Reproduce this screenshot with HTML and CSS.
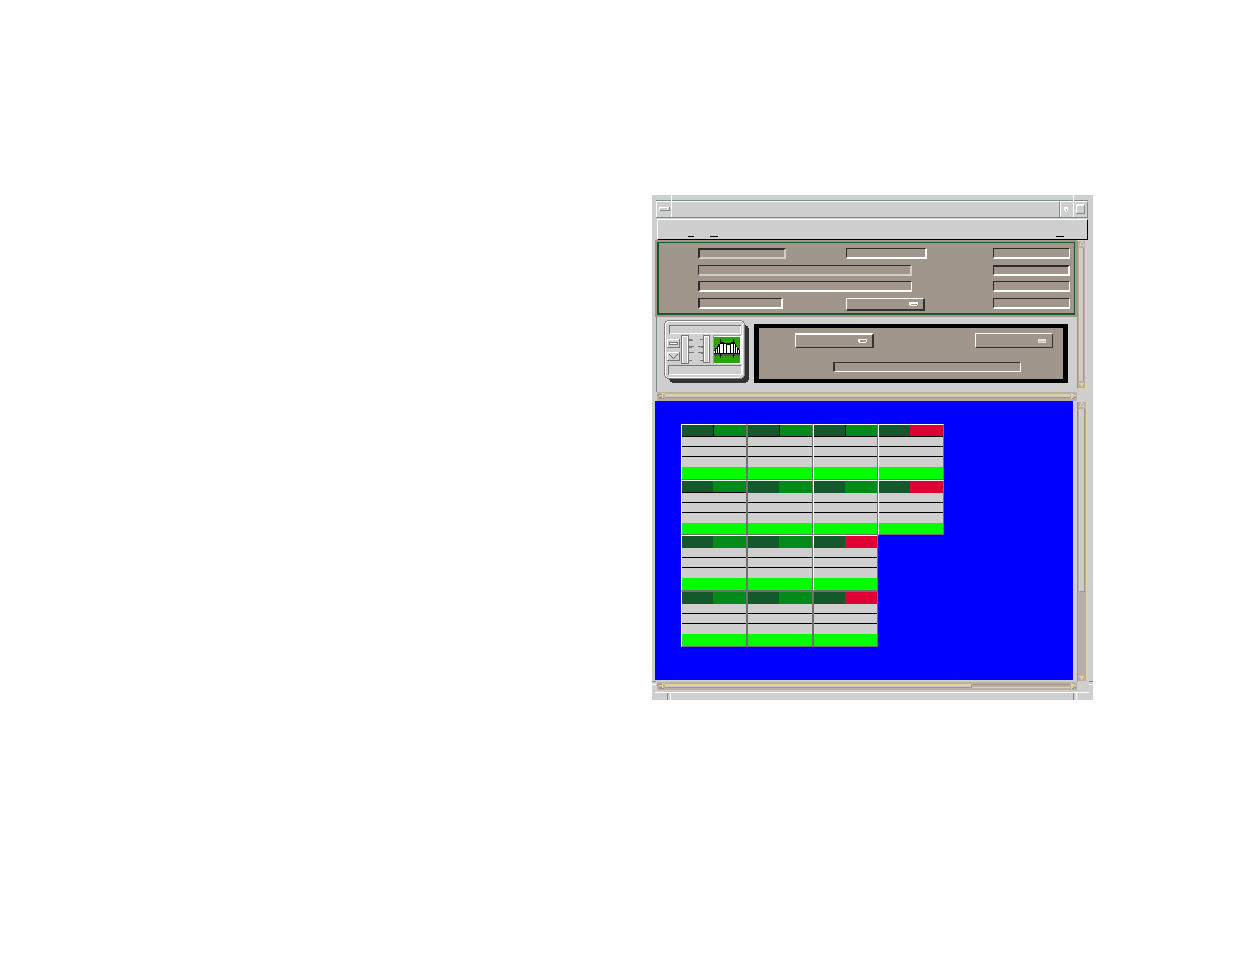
FILE: index.html
```html
<!DOCTYPE html>
<html lang="en">
<head>
  <meta charset="UTF-8" />
  <title>Monitor</title>
  <link rel="stylesheet" href="styles.css">
</head>
<body>

  <div class="window">

    <!-- Title bar -->
    <div class="titlebar">
      <button class="win-menu" aria-label="Window menu">
        <svg width="11" height="4" shape-rendering="crispEdges"><path d="M0 3V0h10v1H1v2z" fill="#fff"/><path d="M1 3h9V0h1v4H1z" fill="#7b8c8c"/><path d="M8 1h1v2H8z" fill="#fff"/></svg>
      </button>
      <div class="title"></div>
      <button class="win-min" aria-label="Minimize">
        <svg width="4" height="5" shape-rendering="crispEdges"><path d="M0 0h4v4H3v1H1V4H0z" fill="#fff"/><path d="M2 2h1v2H2z" fill="#bcbcbc"/></svg>
      </button>
      <button class="win-max" aria-label="Maximize">
        <svg width="9" height="10" shape-rendering="crispEdges"><path d="M0 0h8v2H1v8H0z" fill="#fff"/><path d="M8 1h1v9H0V9h8z" fill="#7b8c8c"/></svg>
      </button>
    </div>

    <!-- Menu bar, only the mnemonic marks show -->
    <div class="menubar">
      <button class="menu" aria-label="File"></button>
      <button class="menu wide" aria-label="Mode"></button>
      <button class="menu wide last" aria-label="Help"></button>
    </div>

    <!-- Upper pane: details and controls -->
    <div class="pane">
      <div class="main">
        <div class="info">
          <form class="fields">
            <input class="field w-small dim thick-top thick-left thick-right" aria-label="Name">
            <input class="field w-mid thick-right" aria-label="Type">
            <input class="field" aria-label="Status">

            <input class="field w-long dim thick-right" aria-label="Description">
            <input class="field thick-top thick-right" aria-label="Count">

            <input class="field w-long thick-left" aria-label="Location">
            <input class="field" aria-label="Limit">

            <input class="field w-code thick-left thick-right" aria-label="Code">
            <span class="option heavy">
              <select aria-label="State"><option></option></select>
              <svg width="9" height="4" shape-rendering="crispEdges"><path d="M0 0h9v3H8v1H1V3H0z" fill="#fff"/><path d="M2 2h6v1H2z" fill="#a1968b"/></svg>
            </span>
            <input class="field" aria-label="Total">
          </form>
        </div>

        <div class="controls">
          <svg class="device" width="86" height="63" shape-rendering="crispEdges">
            <rect x="5" y="5" width="80" height="58" rx="5" fill="#333"/>
            <rect x="0" y="0" width="81" height="59" rx="5" fill="#848484"/>
            <rect x="1" y="1" width="79" height="57" rx="4" fill="#fff"/>
            <rect x="2" y="2" width="78" height="56" rx="4" fill="#cfcfcf"/>
            <path d="M78 4v50l-3 3H5" fill="none" stroke="#fff"/>
            <!-- name plates -->
            <path d="M5 14V5h72v1H6v8z" fill="#777"/>
            <path d="M6 13h70V6h1v8H6z" fill="#fff"/>
            <path d="M4 55V45h73v1H5v9z" fill="#777"/>
            <path d="M5 54h72v-8h1v9H5z" fill="#fff"/>
            <!-- buttons -->
            <path d="M3 19h13v9H3z" fill="#777"/>
            <path d="M3 19h12v8H3z" fill="#fff"/>
            <path d="M4 20h11v7H4z" fill="#cfcfcf"/>
            <path d="M5 22h9v1H6v2H5z" fill="#777"/>
            <path d="M6 23h7v1H6z" fill="#fff"/>
            <path d="M5 24h8v-2h1v3H5z" fill="#777"/>
            <path d="M3 32h13v9H3z" fill="#777"/>
            <path d="M3 32h12v8H3z" fill="#fff"/>
            <path d="M4 33h11v7H4z" fill="#cfcfcf"/>
            <path d="M5 34l4 4h1l4-4" fill="none" stroke="#666"/>
            <!-- sliders -->
            <path d="M17 15h8v29h-8z" fill="#777"/>
            <path d="M18 16h6v27h-6z" fill="#fff"/>
            <path d="M19 17h4v26h-4z" fill="#cfcfcf"/>
            <path d="M39 15h7v28h-7z" fill="#777"/>
            <path d="M40 16h5v26h-5z" fill="#fff"/>
            <path d="M41 17h3v25h-3z" fill="#cfcfcf"/>
            <path d="M25 19h3v1h-3zM25 26h5v1h-5zM25 32h5v1h-5zM25 40h3v1h-3zM36 19h3v1h-3zM34 26h5v1h-5zM34 32h5v1h-5zM36 40h3v1h-3zM25 20h4v1h-4zM25 27h3v1h-3zM37 27h2v1h-2zM37 33h2v1h-2z" fill="#777"/>
            <!-- bridge -->
            <path d="M49 15h29v29H49z" fill="#fff"/>
            <path d="M49 15h28v1H50v28h-1z" fill="#9a9a9a"/>
            <path d="M50 17h26v26H50z" fill="#2ca209"/>
            <path d="M50 34h26v2H50z" fill="#555"/>
            <path d="M50 34v-4h1v-2h2v-2h1v-2h2v-5h1v3h3v1h7v-1h2v-3h1v3h1v2h1v2h1v2h2v2h1v4z" fill="#000"/>
            <path d="M50 31h1v2h-1zM52 29h1v4h-1zM54 27h1v6h-1zM56 24h3v9h-3zM60 24h2v9h-2zM63 25h3v8h-3zM67 24h2v9h-2zM70 24h1v9h-1zM72 27h1v6h-1zM74 30h1v3h-1z" fill="#fff"/>
            <path d="M56 33h1v5h-1zM69 33h1v5h-1z" fill="#000"/>
          </svg>

          <form class="command">
            <div class="options">
              <span class="option top">
                <select aria-label="Action"><option></option></select>
                <svg width="9" height="4" shape-rendering="crispEdges"><path d="M0 0h9v3H8v1H1V3H0z" fill="#fff"/><path d="M2 1h6v2H2z" fill="#a1968b"/></svg>
              </span>
              <span class="option narrow">
                <select aria-label="Filter"><option></option></select>
                <svg width="8" height="4" shape-rendering="crispEdges"><path d="M0 0h8v4H0z" fill="#e4e4e4"/><path d="M1 2h6v1H1z" fill="#bbb"/></svg>
              </span>
            </div>
            <input class="entry" aria-label="Command">
          </form>
        </div>

        <div class="hscroll">
          <svg width="8" height="6" shape-rendering="crispEdges"><path d="M0 3h2V2h3V0h3v1H6v4H5V3z" fill="#e8cf9f"/><path d="M0 2h1V1h4v1H2v1H0zM2 4h3v1h2v1H2z" fill="#a09488"/></svg>
          <div class="thumb"></div>
          <svg width="7" height="6" shape-rendering="crispEdges"><path d="M1 0h1v1h2v1h2v1H3v2H2v1H1z" fill="#e8cf9f"/><path d="M6 3v1H4v1H2v1h2V5h2z" fill="#a09488"/></svg>
        </div>
      </div>

      <div class="vscroll upper">
        <svg width="6" height="6" shape-rendering="crispEdges"><path d="M2 0h1v2H2v2H1v1H0V4h1V2h1z" fill="#e8cf9f"/><path d="M3 0h1v2h1v2h1v1H1V4h3V2H3z" fill="#cdcdc5"/></svg>
        <div class="thumb"></div>
        <svg width="6" height="6" shape-rendering="crispEdges"><path d="M0 1h5v1H4v2H3v1H2V3H1V2H0z" fill="#e8cf9f"/></svg>
      </div>
    </div>

    <!-- Lower pane: board of cards -->
    <div class="pane">
      <div class="main">
        <div class="board">
          <div class="cards">
            <div class="card split"><div class="head"><i></i><i></i></div><p></p><p></p><p></p><div class="ok"></div></div>
            <div class="card split shade-left"><div class="head"><i></i><i></i></div><p></p><p></p><p></p><div class="ok"></div></div>
            <div class="card split"><div class="head"><i></i><i></i></div><p></p><p></p><p></p><div class="ok"></div></div>
            <div class="card alarm ruled"><div class="head"><i></i><i></i></div><p></p><p></p><p></p><div class="ok"></div></div>

            <div class="card ruled"><div class="head"><i></i><i></i></div><p></p><p></p><p></p><div class="ok"></div></div>
            <div class="card shade-left"><div class="head"><i></i><i></i></div><p></p><p></p><p></p><div class="ok"></div></div>
            <div class="card"><div class="head"><i></i><i></i></div><p></p><p></p><p></p><div class="ok"></div></div>
            <div class="card alarm"><div class="head"><i></i><i></i></div><p></p><p></p><p></p><div class="ok"></div></div>

            <div class="card first"><div class="head"><i></i><i></i></div><p></p><p></p><p></p><div class="ok"></div></div>
            <div class="card shade-left"><div class="head"><i></i><i></i></div><p></p><p></p><p></p><div class="ok"></div></div>
            <div class="card alarm"><div class="head"><i></i><i></i></div><p></p><p></p><p></p><div class="ok"></div></div>

            <div class="card first shade-top"><div class="head"><i></i><i></i></div><p></p><p></p><p></p><div class="ok"></div></div>
            <div class="card shade-left shade-top"><div class="head"><i></i><i></i></div><p></p><p></p><p></p><div class="ok"></div></div>
            <div class="card alarm shade-left shade-top"><div class="head"><i></i><i></i></div><p></p><p></p><p></p><div class="ok"></div></div>
          </div>
        </div>

        <div class="hscroll lower">
          <svg width="8" height="6" shape-rendering="crispEdges"><path d="M0 3h2V2h3V0h3v1H6v4H5V3z" fill="#e8cf9f"/><path d="M0 2h1V1h4v1H2v1H0zM2 4h3v1h2v1H2z" fill="#a09488"/></svg>
          <div class="thumb"></div>
          <div class="track"></div>
          <svg width="7" height="6" shape-rendering="crispEdges"><path d="M1 0h1v1h2v1h2v1H3v2H2v1H1z" fill="#e8cf9f"/><path d="M6 3v1H4v1H2v1h2V5h2z" fill="#a09488"/></svg>
        </div>
      </div>

      <div class="vscroll lower">
        <svg width="6" height="6" shape-rendering="crispEdges"><path d="M2 0h1v2H2v2H1v1H0V4h1V2h1z" fill="#e8cf9f"/><path d="M3 0h1v2h1v2h1v1H1V4h3V2H3z" fill="#cdcdc5"/></svg>
        <div class="thumb"></div>
        <div class="track"></div>
        <svg width="6" height="6" shape-rendering="crispEdges"><path d="M0 1h5v1H4v2H3v1H2V3H1V2H0z" fill="#e8cf9f"/></svg>
      </div>
    </div>

    <!-- Resize edge -->
    <div class="bottom"></div>
  </div>

</body>
</html>
```

FILE: styles.css
```css
* {
  box-sizing: border-box;
}
body {
  margin: 0;
  padding: 195px 142px 0 652px;
  background: #fff;
  font-family: "Liberation Sans", Arial, sans-serif;
  font-size: 8px;
}
button, input, select {
  appearance: none;
  margin: 0;
  padding: 0;
  border: 0;
  border-radius: 0;
  background: none;
  font: inherit;
  outline: none;
  min-width: 0;
}
svg {
  display: block;
  flex: none;
}
.window {
  position: relative;
  background: #cfcfcf;
  padding-top: 5px;
}
/* corner marks on the resize frame */
.window::before, .window::after {
  content: "";
  position: absolute;
  bottom: 15px;
  width: 4px;
  height: 2px;
  border-top: 1px solid #7b8c8c;
  border-bottom: 1px solid #fff;
}
.window::before {
  left: 0;
}
.window::after {
  right: 0;
}

/* title bar */
.titlebar {
  display: flex;
  height: 18px;
  margin: 0 5px 0 4px;
  border-top: 1px solid #7b8c8c;
  border-bottom: 1px solid #7b8c8c;
}
.titlebar button {
  display: flex;
  justify-content: center;
  align-items: center;
  border-top: 1px solid #fff;
}
.titlebar .win-menu {
  width: 16px;
  padding-bottom: 1px;
  border-left: 1px solid #fff;
  border-right: 1px solid #fff;
}
.title {
  flex: 1;
  border-top: 1px solid #fff;
  border-right: 1px solid #7b8c8c;
}
.titlebar .win-min {
  width: 14px;
  padding: 0 2px 1px 0;
  border-left: 1px solid #fff;
  border-right: 1px solid #fff;
}
.titlebar .win-max {
  width: 14px;
  padding: 0 1px 2px 0;
  border-right: 1px solid #7b8c8c;
}
.win-menu, .win-min {
  position: relative;
}
.win-menu::after, .win-min::after {
  content: "";
  position: absolute;
  top: -7px;
  right: -1px;
  width: 1px;
  height: 7px;
  background: #fff;
}

/* menu bar */
.menubar {
  display: flex;
  align-items: flex-end;
  gap: 16px;
  height: 21px;
  margin: 1px 5px 0 5px;
  padding: 0 23px 2px 30px;
  border-top: 1px solid #fff;
  border-left: 1px solid #fff;
  border-right: 1px solid #000;
  border-bottom: 1px solid #000;
}
.menu {
  width: 6px;
  height: 14px;
  border-bottom: 1px solid #000;
}
.menu.wide {
  width: 8px;
}
.menu.last {
  margin-left: auto;
}

/* panes */
.pane {
  display: grid;
  grid-template-columns: minmax(0, 1fr) 10px;
  margin: 0 6px 0 3px;
}
.info {
  padding: 2px;
  background: #a1968b;
}
.fields {
  display: grid;
  grid-template-columns: 148px 1fr 77px;
  grid-template-rows: 17px 16px 17px 13px;
  align-items: start;
  padding: 5px 4px 2px 39px;
  border: 2px solid #14592b;
  border-top-width: 1px;
  border-right-width: 1px;
}
.field {
  width: 77px;
  height: 11px;
  border: 1px solid #33292b;
  border-right-color: #fff;
  border-bottom: 2px solid #fff;
}
.field.dim {
  border-right-color: #cfcfcf;
  border-bottom-color: #cfcfcf;
}
.field.thick-top {
  border-top-width: 2px;
}
.field.thick-left {
  border-left-width: 2px;
}
.field.thick-right {
  border-right-width: 2px;
}
.w-small {
  width: 88px;
}
.w-mid {
  width: 81px;
}
.w-long {
  grid-column: span 2;
  width: 214px;
}
.w-code {
  width: 85px;
}
.option {
  display: flex;
  align-items: center;
  width: 79px;
  height: 15px;
  padding-right: 5px;
  border: 1px solid #fff;
  border-right-color: #333;
  border-bottom-color: #333;
}
.option select {
  flex: 1;
  height: 100%;
}
.option.heavy {
  height: 13px;
  border-right-width: 2px;
  border-bottom-width: 2px;
}
.option.top {
  border-top-width: 2px;
  border-right-width: 2px;
}
.option.narrow {
  width: 78px;
  padding-right: 6px;
}

.controls {
  display: flex;
  gap: 4px;
  margin-left: 1px;
  padding: 3px 9px 9px 7px;
  border-left: 1px solid #7b8c8c;
}
.command {
  flex: 1;
  margin-top: 4px;
  padding: 5px 10px 7px 36px;
  background: #a1968b;
  border: solid #000;
  border-width: 4px 5px;
}
.options {
  display: flex;
  justify-content: space-between;
}
.entry {
  display: block;
  width: 188px;
  height: 10px;
  margin: 14px 0 0 38px;
  border: 1px solid #fff;
  border-top-color: #333;
  border-left: 2px solid #333;
}

/* scroll bars */
.hscroll {
  display: flex;
  align-items: center;
  height: 9px;
  margin-left: 2px;
  background: #b9afa4;
  border-bottom: 1px solid #b9afa4;
}
.hscroll .thumb {
  flex: 1;
  height: 4px;
  background: #cdcdc5;
  border-top: 1px solid #e8cf9f;
  border-bottom: 1px solid #a09488;
}
.hscroll.lower {
  height: 12px;
  border-top: 2px solid #cdcdc5;
  border-bottom: 2px solid #cdcdc5;
}
.hscroll.lower .thumb {
  border-right: 1px solid #a09488;
}
.hscroll .track {
  width: 98px;
  height: 4px;
  border-top: 1px solid #a09488;
  border-bottom: 1px solid #e8cf9f;
}
.vscroll {
  display: flex;
  flex-direction: column;
  align-items: center;
  background: #b9afa4;
  border-left: 1px solid #a09488;
  border-right: 1px solid #e8cf9f;
  border-bottom: 1px solid #e8cf9f;
}
.vscroll .thumb {
  flex: 1;
  width: 5px;
  margin: 1px 0;
  background: #cdcdc5;
  border-left: 1px solid #e8cf9f;
  border-right: 1px solid #a09488;
}
.vscroll.upper {
  width: 9px;
  margin: 1px 0 12px;
}
.vscroll.lower {
  margin: 1px 0 10px;
}
.vscroll.lower .thumb {
  width: 6px;
  border-bottom: 1px solid #a09488;
}
.vscroll .track {
  height: 82px;
}

/* board */
.board {
  margin-right: 4px;
  padding: 23px 26px 33px;
  background: #00f;
}
.cards {
  display: grid;
  grid-template-columns: 66px 66px 65px 66px;
  grid-template-rows: 56px 55px 56px 56px;
}
.card {
  display: flex;
  flex-direction: column;
  background: #cfcfcf;
  border: 1px solid #fff;
  border-right-color: #707070;
  border-bottom-color: #707070;
}
.card.first {
  grid-column: 1;
}
.card.shade-left {
  border-left-color: #707070;
}
.card.shade-top {
  border-top-color: #707070;
}
.head {
  display: flex;
  height: 12px;
}
.split .head, .ruled .head {
  border-bottom: 1px solid #000;
}
.head i {
  width: 31px;
  background: #14592b;
}
.head i + i {
  flex: 1;
  background: #028a1a;
}
.split .head i + i {
  border-left: 1px solid #000;
}
.alarm .head i + i {
  background: #e00033;
}
.card p {
  height: 10px;
  margin: 0;
  border-bottom: 1px solid #000;
}
.card p + p + p {
  border-bottom: 0;
}
.ok {
  flex: 1;
  background: #0f0;
}

/* bottom edge */
.bottom {
  height: 8px;
  margin: 0 4px 0 3px;
  border-top: 1px solid #fff;
  display: flex;
  justify-content: space-between;
  padding: 0 12px;
}
.bottom::before, .bottom::after {
  content: "";
  width: 2px;
  border-left: 1px solid #7b8c8c;
  border-right: 1px solid #fff;
}
```
